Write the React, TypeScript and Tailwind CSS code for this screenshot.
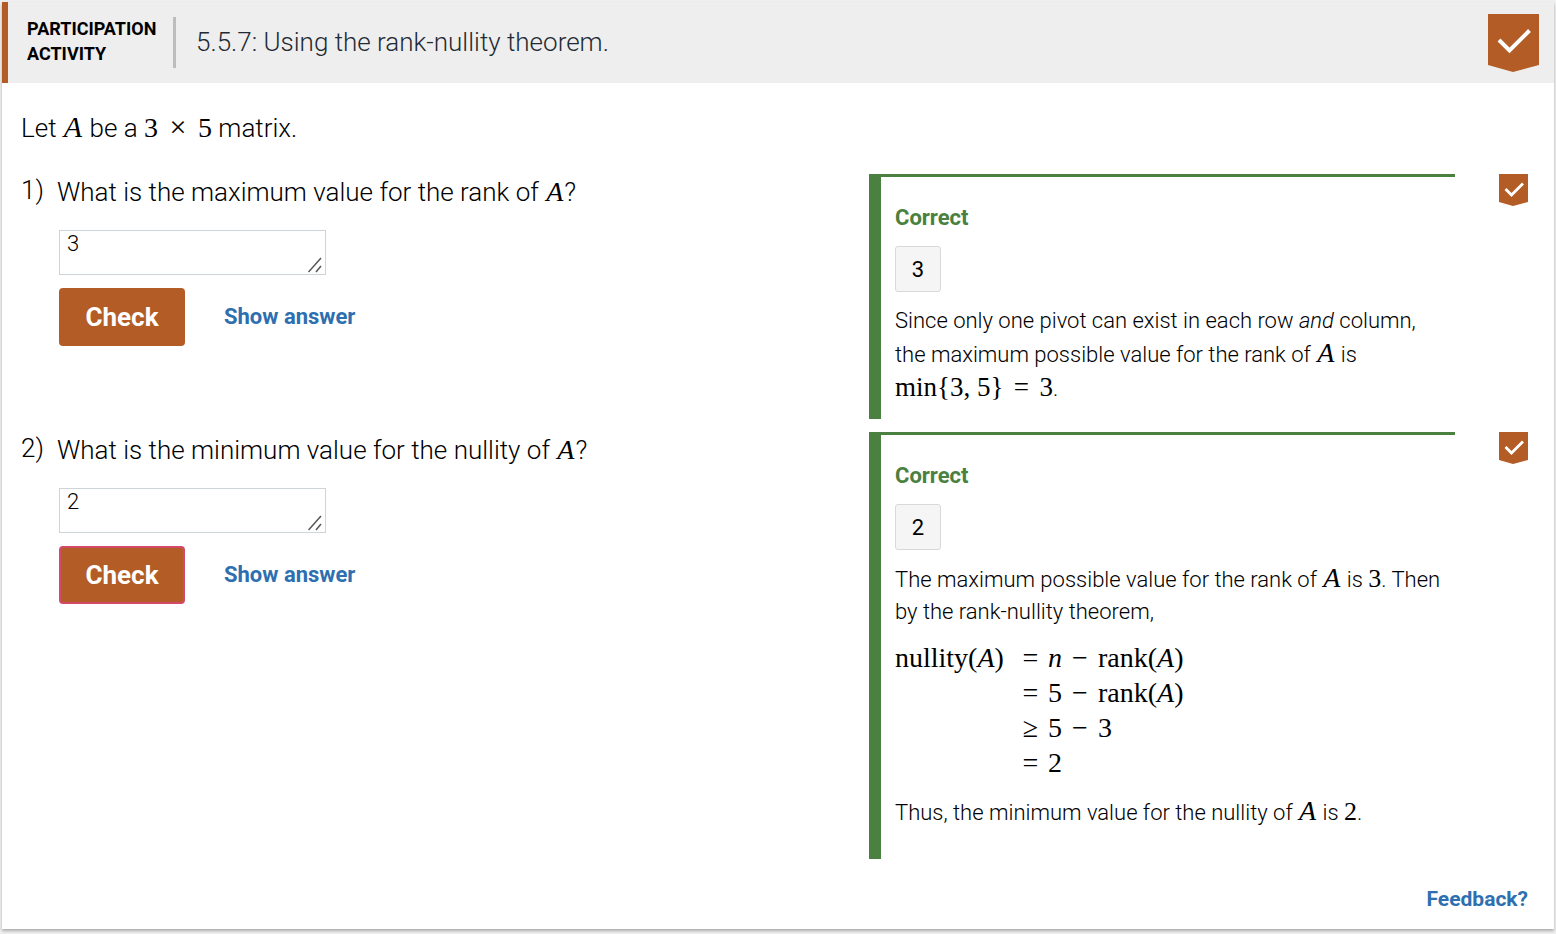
import React from "react";

function Badge({ large = false }: { large?: boolean }) {
  return large ? (
    <svg className="block h-[58px] w-[51px]" viewBox="0 0 51 58" role="img" aria-label="Activity completed">
      <path d="M0 0H51V51L25 58L0 51Z" fill="#b35c26" />
      <path d="M11 26L21.5 36.5L41.5 16.5" fill="none" stroke="#fff" strokeWidth="4" />
    </svg>
  ) : (
    <svg className="block h-8 w-[29px]" viewBox="0 0 29 32" role="img" aria-label="Question completed">
      <path d="M0 0H29V28L14 32L0 28Z" fill="#b35c26" />
      <path d="M6.500 15L12.500 21L24 9.500" fill="none" stroke="#fff" strokeWidth="2.800" />
    </svg>
  );
}

function V({ children }: { children: React.ReactNode }) {
  return <i className="px-px font-['Liberation_Serif',serif] text-[28px] leading-none font-normal">{children}</i>;
}

function N({ children }: { children: React.ReactNode }) {
  return <span className="font-['Liberation_Serif',serif] text-[26px] leading-none font-normal">{children}</span>;
}

function Op({ children }: { children: React.ReactNode }) {
  return <span className="inline-block w-9 text-center">{children}</span>;
}

type QuestionProps = {
  id: string;
  number: number;
  answer: string;
  focused?: boolean;
  prompt: React.ReactNode;
  children: React.ReactNode;
};

function Question({ id, number, answer, focused = false, prompt, children }: QuestionProps) {
  return (
    <section className="grid grid-cols-[848fr_586fr_73px]">
      <div className="flex">
        <span className="w-9 shrink-0 text-[26px] leading-8">{number})</span>
        <div>
          <label htmlFor={id} className="block pt-[2px] text-[26px] leading-8">
            {prompt}
          </label>
          <div className="relative mt-[22px] ml-[2px] w-[267px]">
            <textarea
              id={id}
              defaultValue={answer}
              rows={1}
              className="block h-[45px] w-full resize-none overflow-hidden border border-[#cdd5d8] bg-white px-[7px] text-[22px] leading-[26px] font-light outline-none"
            />
            <svg className="pointer-events-none absolute right-[2px] bottom-[2px] size-4" viewBox="0 0 16 16" aria-hidden="true">
              <path d="M0.500 15L13 1M8 15L13 9" fill="none" stroke="#555" strokeWidth="1.500" />
            </svg>
          </div>
          <div className="mt-[13px] ml-[2px] flex items-center gap-[39px]">
            <button
              type="button"
              className={
                focused
                  ? "h-[58px] w-[126px] rounded-[4px] border-2 border-[#d4496a] bg-[#b35c26] text-[26px] font-bold text-white"
                  : "h-[58px] w-[126px] rounded-[4px] bg-[#b35c26] text-[26px] font-bold text-white"
              }
            >
              Check
            </button>
            <button type="button" className="text-[22px] leading-7 font-bold text-[#2e6fb0]">
              Show answer
            </button>
          </div>
        </div>
      </div>
      <div className="border-t-[3px] border-l-12 border-[#4a8040] pt-[27px] pl-[14px] text-[22px]">
        <h2 className="leading-7 font-bold text-[#4a8040]">Correct</h2>
        <div className="mt-[14px] flex h-[46px] w-[46px] items-center justify-center rounded-[3px] border border-[#d9d9d9] bg-[#f5f5f5] font-normal">
          {answer}
        </div>
        {children}
      </div>
      <div className="flex items-start justify-end">
        <Badge />
      </div>
    </section>
  );
}

export default function App() {
  return (
    <div className="min-h-screen bg-[#f0f0f0] px-[2px] pt-[2px] pb-1 font-[Roboto,sans-serif] font-light text-black">
      <main className="bg-white pb-4 shadow-[0_2px_3px_#aaa]">
        <header className="flex h-[81px] items-center border-l-6 border-[#b35c26] bg-[#eeeeee] pr-[15px] pl-[19px]">
          <div className="w-[146px] pb-1 text-[18px] leading-[25px] font-bold uppercase">
            Participation
            <br />
            Activity
          </div>
          <div className="h-[51px] w-[3px] bg-[#bdbdbd]" />
          <h1 className="ml-5 flex-1 pb-[2px] text-[26px] leading-8 text-[#1f2a33]">
            5.5.7: Using the rank-nullity theorem.
          </h1>
          <Badge large />
        </header>
        <div className="pr-[26px] pl-[19px]">
          <p className="pt-[29px] text-[26px] leading-8">
            Let <i className="px-px font-['Liberation_Serif',serif] text-[30px] leading-none font-normal">A</i> be a{" "}
            <span className="font-['Liberation_Serif',serif] text-[28px] leading-none font-normal">
              3<span className="inline-block w-10 text-center text-[30px]">×</span>5
            </span>{" "}
            matrix.
          </p>
          <div className="mt-[30px] flex flex-col gap-[13px]">
            <Question
              id="answer-1"
              number={1}
              answer="3"
              prompt={
                <>
                  What is the maximum value for the rank of <V>A</V>?
                </>
              }
            >
              <p className="mt-3 pr-2 pb-[13px] leading-[34px]">
                Since only one pivot can exist in each row <em>and</em> column, the maximum possible value for the rank of{" "}
                <V>A</V> is <br />
                <span className="font-['Liberation_Serif',serif] text-[27px] leading-none font-normal">
                  min{"{"}3, 5{"}"}
                  <Op>=</Op>3
                </span>
                .
              </p>
            </Question>
            <Question
              id="answer-2"
              number={2}
              answer="2"
              focused
              prompt={
                <>
                  What is the minimum value for the nullity of <V>A</V>?
                </>
              }
            >
              <p className="mt-[14px] leading-8">
                The maximum possible value for the rank of <V>A</V> is <N>3</N>. Then by the rank-nullity theorem,
              </p>
              <div className="mt-3 grid grid-cols-[118px_35px_1fr] font-['Liberation_Serif',serif] text-[28px] leading-[35px] font-normal">
                <span>
                  nullity(<i>A</i>)
                </span>
                <span className="text-center">=</span>
                <span>
                  <i>n</i>
                  <Op>−</Op>rank(<i>A</i>)
                </span>
                <span className="col-start-2 text-center">=</span>
                <span>
                  5<Op>−</Op>rank(<i>A</i>)
                </span>
                <span className="col-start-2 text-center">≥</span>
                <span>
                  5<Op>−</Op>3
                </span>
                <span className="col-start-2 text-center">=</span>
                <span>2</span>
              </div>
              <p className="mt-4 pb-[30px] leading-[33px]">
                Thus, the minimum value for the nullity of <V>A</V> is <N>2</N>.
              </p>
            </Question>
          </div>
          <div className="mt-[26px] flex justify-end">
            <a href="#feedback" className="text-[21px] leading-7 font-bold text-[#2e6fb0]">
              Feedback?
            </a>
          </div>
        </div>
      </main>
    </div>
  );
}
